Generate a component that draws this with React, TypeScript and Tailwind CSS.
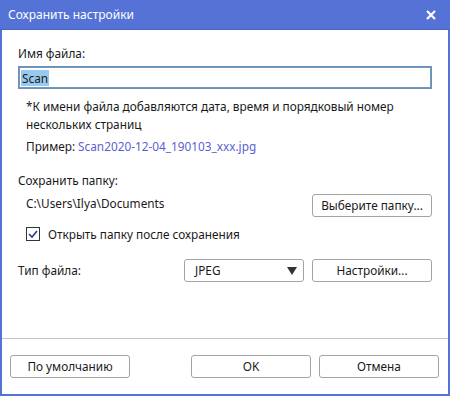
export default function App() {
  const font = { fontFamily: '"Noto Sans", "Open Sans", sans-serif' };
  return (
    <div
      className="w-[450px] h-[396px] flex flex-col bg-white text-[11.8px] text-[#1a1a1a] border-x-2 border-b-2 border-[#5573d6]"
      style={font}
    >
      <div className="h-[30px] -mx-[2px] flex items-center justify-between bg-[#5573d6] border-b border-[#4862bd] pl-[8px] pr-[14px] text-white text-[12px]">
        <span>Сохранить настройки</span>
        <svg width="10" height="10" viewBox="0 0 10 10">
          <path d="M1 1 L9 9 M9 1 L1 9" stroke="#fff" strokeWidth="2.2" />
        </svg>
      </div>

      <div className="flex-1 flex flex-col pl-[16px] pr-[16px]">
        <div className="mt-[14px] leading-[18px]">Имя файла:</div>
        <div className="mt-[4px] h-[23px] border border-[#7f8c9c] shadow-[inset_0_0_0_1px_#5c9ddb] flex items-center px-[2px]">
          <span className="bg-[#99c9ef] px-[1px] leading-[16px]">Scan</span>
        </div>

        <div className="mt-[8px] ml-[8px] leading-[18px]">
          *К имени файла добавляются дата, время и порядковый номер
          <br />
          нескольких страниц
        </div>
        <div className="mt-[4px] ml-[8px] leading-[18px]">
          Пример: <span className="text-[#5b5fd3]">Scan2020-12-04_190103_xxx.jpg</span>
        </div>

        <div className="mt-[16px] leading-[18px]">Сохранить папку:</div>
        <div className="mt-[5px] flex items-center justify-between">
          <span className="ml-[8px] mb-[4px]">C:\Users\Ilya\Documents</span>
          <button className="w-[120px] h-[23px] border border-[#a3a3a3] rounded-[3px] bg-white">
            Выберите папку...
          </button>
        </div>

        <label className="mt-[8px] ml-[8px] flex items-center gap-[8px] leading-[18px]">
          <span className="w-[14px] h-[14px] border border-[#333] flex items-center justify-center bg-white">
            <svg width="10" height="10" viewBox="0 0 10 10">
              <path d="M1 5 L4 8 L9 2" fill="none" stroke="#1f3f8f" strokeWidth="1.6" />
            </svg>
          </span>
          Открыть папку после сохранения
        </label>

        <div className="mt-[16px] flex items-center">
          <span className="flex-1">Тип файла:</span>
          <div className="w-[120px] h-[23px] border border-[#a3a3a3] rounded-[3px] flex items-center justify-between pl-[10px] pr-[6px]">
            <span>JPEG</span>
            <svg width="10" height="8" viewBox="0 0 10 8">
              <path d="M0 0 L10 0 L5 8 Z" fill="#333" />
            </svg>
          </div>
          <button className="ml-[8px] w-[120px] h-[23px] border border-[#a3a3a3] rounded-[3px] bg-white">
            Настройки...
          </button>
        </div>
      </div>

      <div className="border-t border-[#c4c4c4] pt-[16px] pb-[16px] pl-[8px] pr-[9px] flex items-center">
        <button className="w-[120px] h-[23px] border border-[#a3a3a3] rounded-[3px] bg-white">
          По умолчанию
        </button>
        <div className="flex-1" />
        <button className="w-[120px] h-[23px] border border-[#a3a3a3] rounded-[3px] bg-white">
          OK
        </button>
        <button className="ml-[8px] w-[120px] h-[23px] border border-[#a3a3a3] rounded-[3px] bg-white">
          Отмена
        </button>
      </div>
    </div>
  );
}
